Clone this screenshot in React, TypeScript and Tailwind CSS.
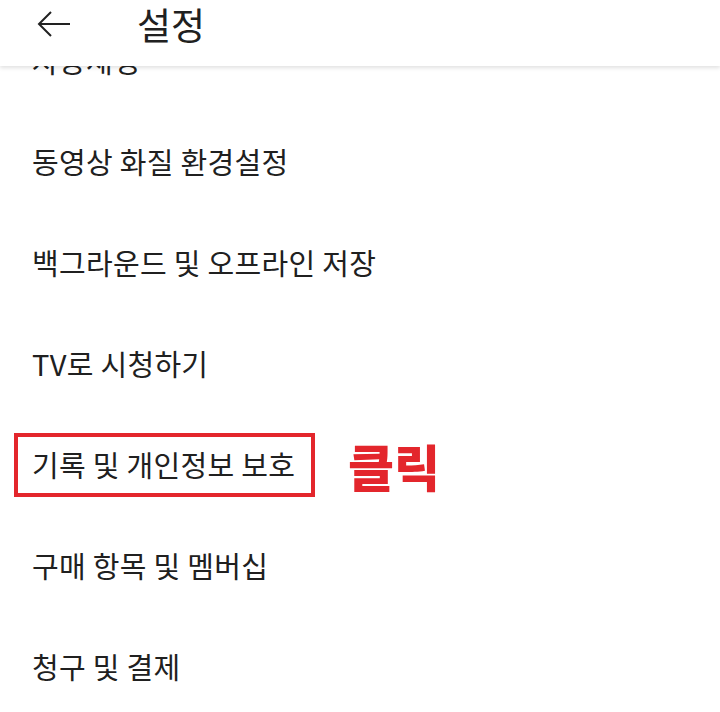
const items = [
  '자동재생',
  '동영상 화질 환경설정',
  '백그라운드 및 오프라인 저장',
  'TV로 시청하기',
  '기록 및 개인정보 보호',
  '구매 항목 및 멤버십',
  '청구 및 결제',
]

export default function App() {
  return (
    <div
      className="relative h-[712px] w-[720px] overflow-hidden bg-white text-[#202020]"
      style={{ fontFamily: '"Noto Sans CJK KR", "Noto Sans", sans-serif' }}
    >
      <div className="absolute inset-x-0 top-0 z-10 flex h-[66px] items-start bg-white shadow-[0_2px_4px_rgba(0,0,0,0.12)]">
        <svg viewBox="0 0 34 26" className="ml-[37px] mt-[11px] h-[26px] w-[34px]" fill="none" stroke="#222" strokeWidth={2}>
          <path d="M33 13H2M14 1L2 13l12 12" />
        </svg>
        <h1 className="ml-[66px] mt-[2px] text-[37px] font-normal leading-[44px]">설정</h1>
      </div>
      <ul className="pt-[10px]">
        {items.map((label) => (
          <li key={label} className="flex h-[101px] items-center">
            {label === '기록 및 개인정보 보호' ? (
              <div className="flex items-center">
                <div className="ml-[14px] flex h-[64px] w-[301px] items-center border-4 border-[#e3262c] pl-[14px]">
                  <span className="text-[29px] tracking-[0.3px]">{label}</span>
                </div>
                <span className="ml-[33px] text-[50px] font-black leading-none text-[#e3262c]">클릭</span>
              </div>
            ) : (
              <span className="ml-[32px] text-[29px] tracking-[0.3px]">{label}</span>
            )}
          </li>
        ))}
      </ul>
    </div>
  )
}
